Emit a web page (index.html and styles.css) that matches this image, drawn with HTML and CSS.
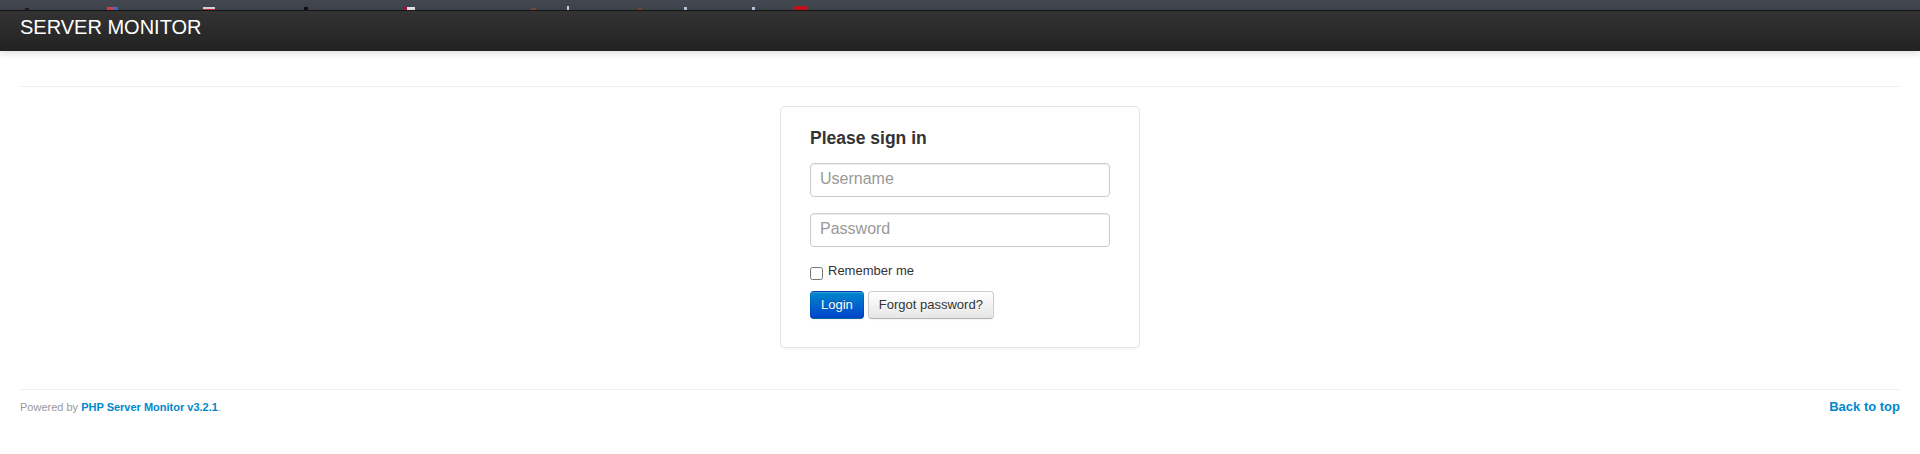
FILE: index.html
```html
<!DOCTYPE html>
<html lang="en">
<head>
<meta charset="utf-8">
<title>Server Monitor</title>
<link rel="stylesheet" href="styles.css">
</head>
<body>
<div class="topstrip">
  <span class="frag frag-a"></span>
  <span class="frag frag-b"></span>
  <span class="frag frag-c"></span>
  <span class="frag frag-d"></span>
  <span class="frag frag-e"></span>
  <span class="frag frag-f"></span>
  <span class="frag frag-g"></span>
  <span class="frag frag-h"></span>
  <span class="frag frag-i"></span>
  <span class="frag frag-j"></span>
  <span class="frag frag-k"></span>
</div>
<header class="navbar">
  <a class="brand" href="#">SERVER MONITOR</a>
</header>
<main class="container">
  <hr class="rule rule-top">
  <form class="signin">
    <h4 class="signin-heading">Please sign in</h4>
    <input class="field" type="text" placeholder="Username">
    <input class="field" type="password" placeholder="Password">
    <label class="remember"><input class="check" type="checkbox"><span>Remember me</span></label>
    <div class="actions">
      <button class="btn btn-primary" type="button">Login</button>
      <button class="btn" type="button">Forgot password?</button>
    </div>
  </form>
  <hr class="rule rule-bottom">
  <footer class="footer">
    <p class="powered">Powered by <a href="#">PHP Server Monitor v3.2.1</a>.</p>
    <a class="totop" href="#">Back to top</a>
  </footer>
</main>
</body>
</html>
```

FILE: styles.css
```css
* { box-sizing: border-box; }
html, body { margin: 0; padding: 0; background: #fff; }
body {
  font-family: "Liberation Sans", Arial, Helvetica, sans-serif;
  font-size: 13px;
  color: #333;
}

.topstrip {
  height: 10px;
  background: #42464f;
  display: flex;
  align-items: flex-end;
}
.frag { display: block; height: 2px; flex: none; }
.frag-a { width: 4px; margin-left: 25px; background: #1e1f22; }
.frag-b { width: 11px; margin-left: 78px; height: 3px; background: linear-gradient(to right, #d8434b 60%, #3f6fd0 60%); }
.frag-c { width: 12px; margin-left: 85px; height: 3px; background: #d9d9e2; border-bottom: 1px solid #c33; }
.frag-d { width: 4px; margin-left: 89px; height: 3px; background: #111; }
.frag-e { width: 12px; margin-left: 95px; height: 3px; background: #e9e9ee; border-left: 4px solid #b0103a; }
.frag-f { width: 5px; margin-left: 116px; background: #7a4a36; }
.frag-g { width: 2px; margin-left: 31px; height: 4px; background: #cfd3da; }
.frag-h { width: 4px; margin-left: 69px; background: #7a4a36; }
.frag-i { width: 3px; margin-left: 42px; height: 3px; background: #b8cbe4; }
.frag-j { width: 3px; margin-left: 65px; height: 3px; background: #b8cbe4; }
.frag-k { width: 14px; margin-left: 38px; height: 4px; background: #c1141a; }

.navbar {
  height: 41px;
  border-top: 1px solid #151515;
  background: linear-gradient(to bottom, #333333, #222222);
  box-shadow: 0 1px 8px rgba(0, 0, 0, 0.18);
  display: flex;
  align-items: flex-start;
  padding: 6px 20px 0;
  position: relative;
}
.brand {
  color: #fff;
  text-decoration: none;
  font-size: 20px;
  font-weight: 200;
  line-height: 20px;
}

.container {
  margin: 0 20px;
}
.rule {
  border: 0;
  border-top: 1px solid #eee;
  border-bottom: 1px solid #fff;
  margin: 0;
}
.rule-top { margin-top: 35px; }
.rule-bottom { margin-top: 41px; }

.signin {
  width: 360px;
  margin: 18px auto 0;
  padding: 19px 29px 28px;
  border: 1px solid #e5e5e5;
  border-radius: 5px;
  box-shadow: 0 1px 2px rgba(0, 0, 0, 0.05);
  background: #fff;
  display: flex;
  flex-direction: column;
}
.signin-heading {
  margin: 0 0 13px;
  font-size: 17.5px;
  line-height: 24px;
  font-weight: bold;
  color: #333;
}
.field {
  display: block;
  width: 300px;
  height: 34px;
  margin: 0 0 16px;
  padding: 4px 9px 6px;
  font-family: "Liberation Sans", Arial, sans-serif;
  font-size: 16px;
  line-height: 22px;
  color: #555;
  border: 1px solid #ccc;
  border-radius: 4px;
  background: #fff;
  box-shadow: inset 0 1px 1px rgba(0, 0, 0, 0.075);
  outline: none;
}
.field::placeholder { color: #999; }

.remember {
  display: flex;
  align-items: flex-start;
  line-height: 16px;
  font-size: 13px;
  color: #333;
  margin-bottom: 11px;
}
.check {
  width: 13px;
  height: 13px;
  margin: 4px 5px 0 0;
  flex: none;
}

.actions {
  display: flex;
  gap: 4px;
}
.btn {
  height: 28px;
  padding: 0 10px;
  font-family: "Liberation Sans", Arial, sans-serif;
  font-size: 13px;
  line-height: 18px;
  color: #333;
  text-shadow: 0 1px 1px rgba(255, 255, 255, 0.75);
  background: linear-gradient(to bottom, #ffffff, #e6e6e6);
  border: 1px solid #ccc;
  border-bottom-color: #b3b3b3;
  border-radius: 4px;
  box-shadow: inset 0 1px 0 rgba(255, 255, 255, 0.2), 0 1px 2px rgba(0, 0, 0, 0.05);
  cursor: pointer;
}
.btn-primary {
  color: #fff;
  text-shadow: 0 -1px 0 rgba(0, 0, 0, 0.25);
  background: linear-gradient(to bottom, #0088cc, #0044cc);
  border-color: rgba(0, 0, 0, 0.1) rgba(0, 0, 0, 0.1) rgba(0, 0, 0, 0.25);
}

.footer {
  display: flex;
  justify-content: space-between;
  align-items: baseline;
  padding-top: 6px;
}
.powered {
  margin: 0;
  font-size: 11px;
  line-height: 20px;
  color: #999;
}
.powered a, .totop {
  color: #0088cc;
  font-weight: bold;
  text-decoration: none;
}
.totop {
  font-size: 13px;
  line-height: 20px;
}
```
